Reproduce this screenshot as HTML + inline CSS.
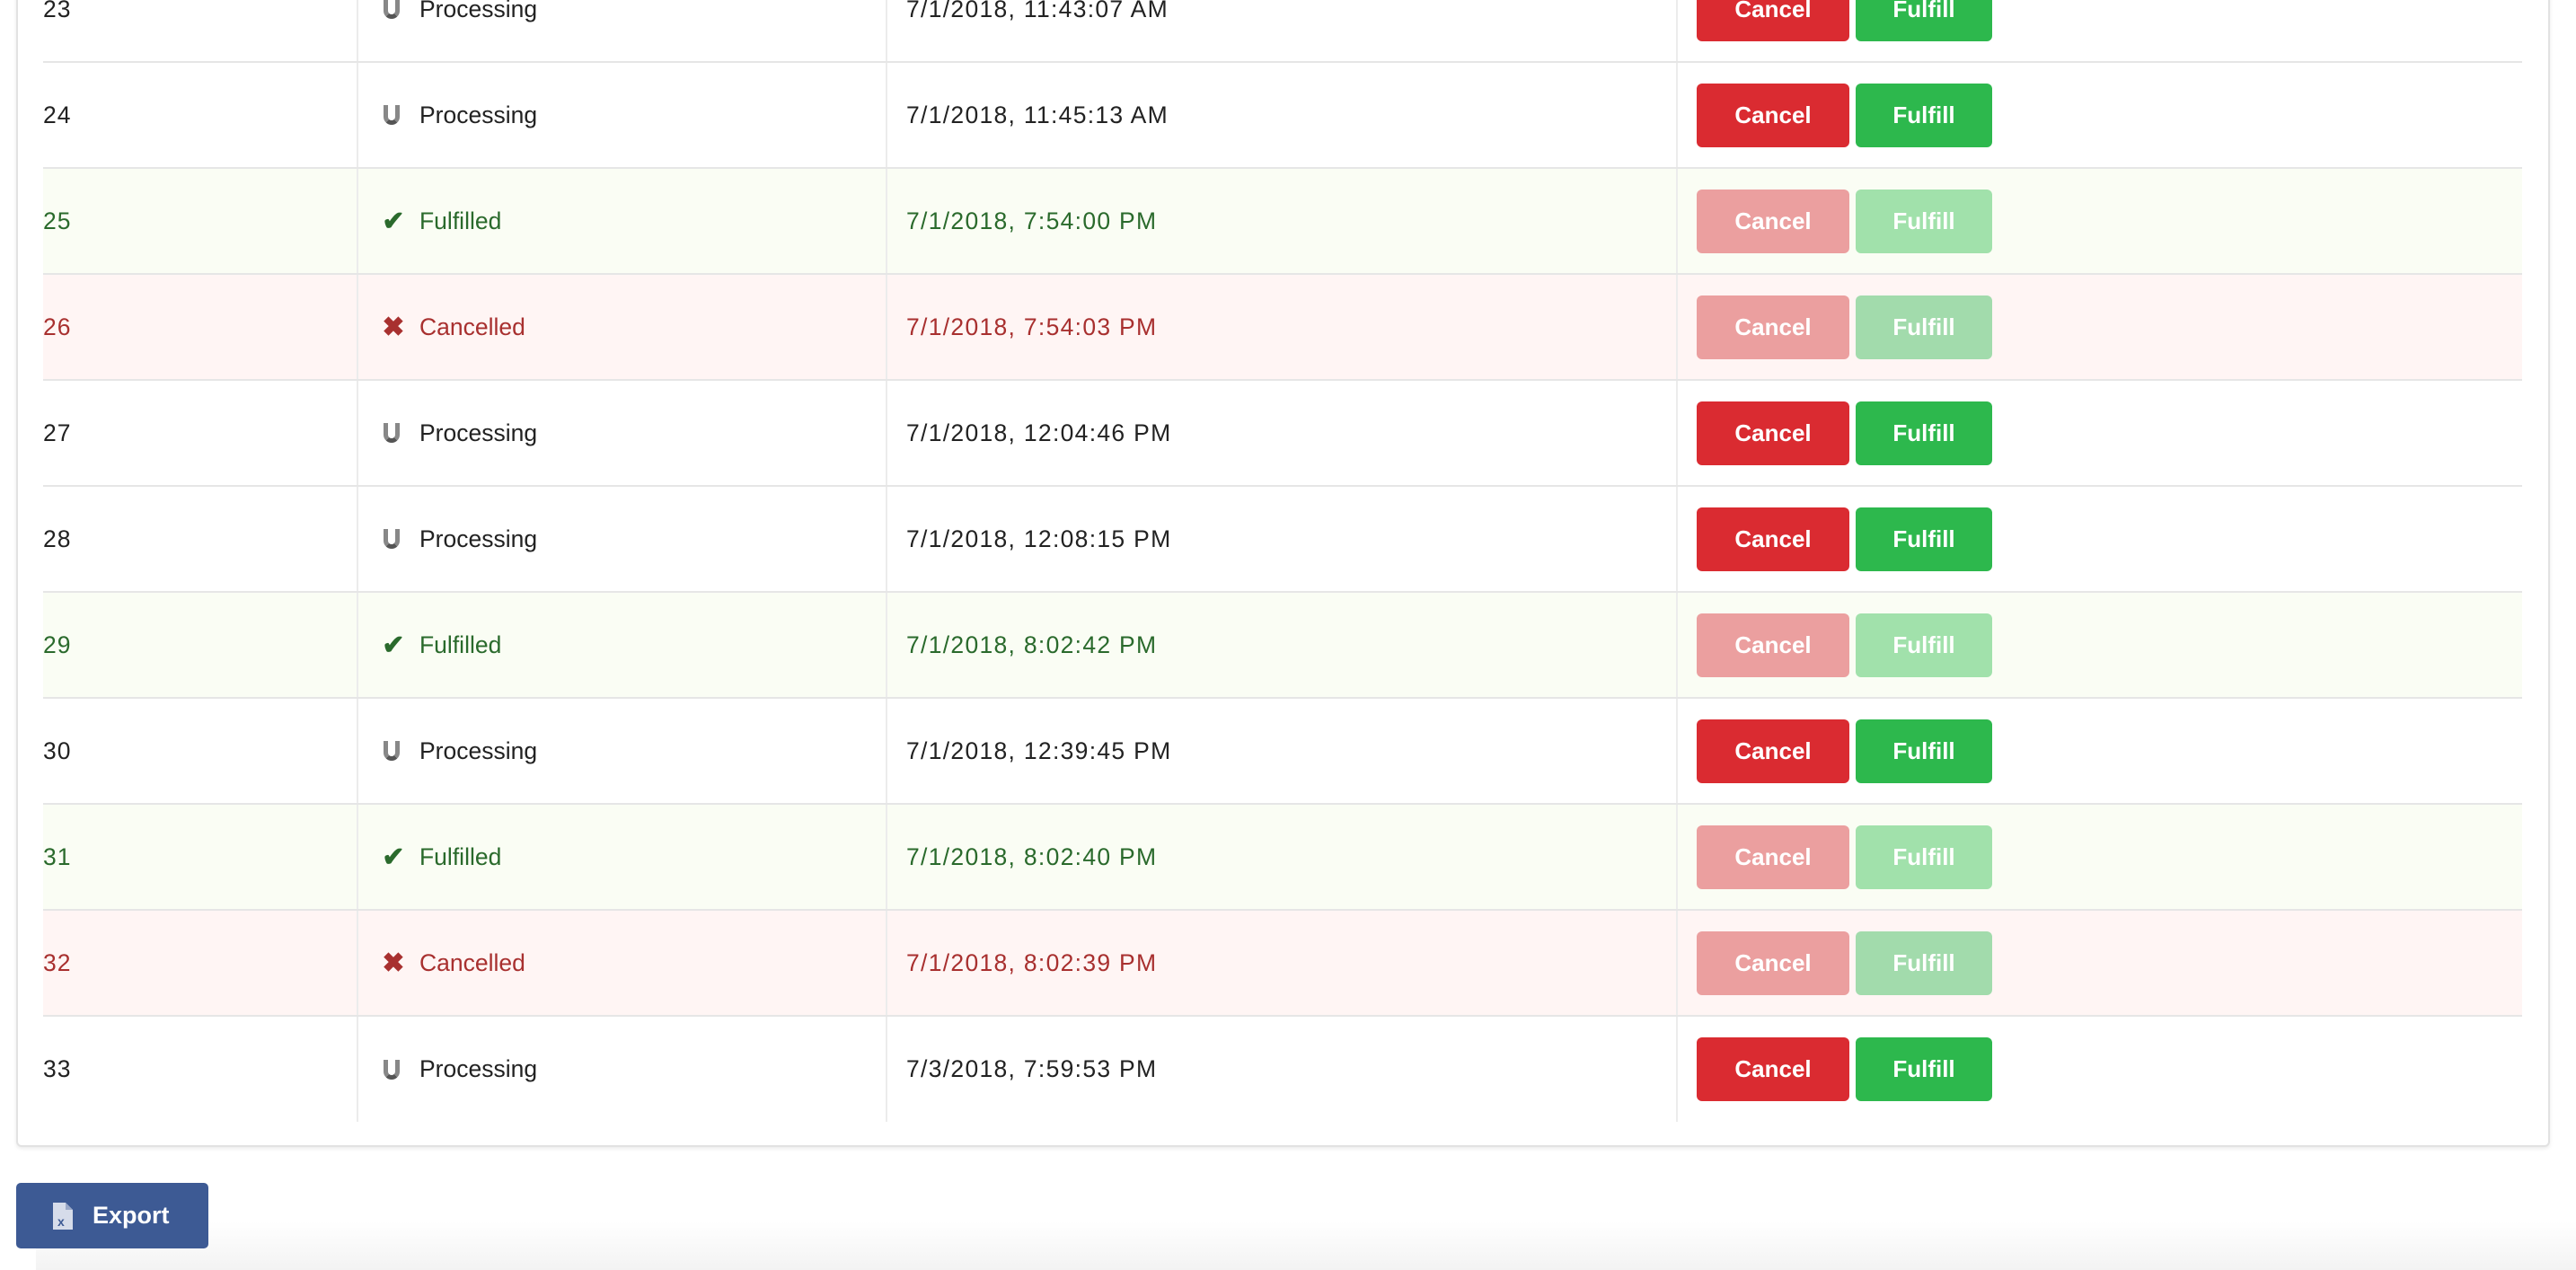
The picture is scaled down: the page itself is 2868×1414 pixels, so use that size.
<!DOCTYPE html>
<html><head><meta charset="utf-8"><style>
html,body{margin:0;padding:0;width:2868px;height:1414px;overflow:hidden;background:#fff;font-family:"Liberation Sans",sans-serif}
.card{position:absolute;left:18px;top:-20px;width:2817px;height:1293px;border:2px solid #e2e2e2;border-radius:6px;box-shadow:0 2px 4px rgba(0,0,0,.08);background:#fff}
.tbl{position:absolute;left:48px;top:-48px;width:2760px}
.row{position:relative;height:116px;border-bottom:2px solid #e6e6e6;font-size:26.5px;color:#222}
.row.last{border-bottom:none;height:117px}
.row.ok{background:#fafdf4;color:#2a6a2c}
.row.no{background:#fff5f4;color:#a8302f}
.c{position:absolute;top:0;height:100%;display:flex;align-items:center}
.c1{left:0;letter-spacing:1px}
.c2{left:349px;width:589px;border-left:2px solid #ececec;padding-left:26px;box-sizing:border-box}
.c3{left:938px;width:880px;border-left:2px solid #ececec;padding-left:21px;box-sizing:border-box;letter-spacing:1.3px}
.c4{left:1818px;width:942px;border-left:2px solid #ececec;padding-left:21px;box-sizing:border-box}
.ic{display:inline-block;width:26px;margin-right:16px;text-align:center;font-weight:bold;font-size:30px}
.u{width:18px;height:22px;margin-right:22px;margin-left:2px;border:5px solid #777;border-top:none;border-radius:0 0 12px 12px;box-sizing:border-box;border-color:#ccc #888 #555 #888}
.b{display:inline-flex;align-items:center;justify-content:center;height:71px;border-radius:6px;color:#fff;font-weight:bold;font-size:26px;letter-spacing:0}
.cn{width:170px;background:#da2b31;margin-right:7px}
.fl{width:152px;background:#2db84d}
.ok .cn,.no .cn{background:#eb9f9f}
.ok .fl{background:#a1e1ab}
.no .fl{background:#a2dbac}
.exp{position:absolute;left:18px;top:1317px;width:214px;height:73px;background:#3d5a94;border-radius:5px;color:#fff;font-weight:bold;font-size:27px;display:flex;align-items:center}
.fade{position:absolute;left:40px;right:0;top:1360px;height:54px;background:linear-gradient(#fff,#f3f3f3)}
</style></head><body>
<div class="fade"></div>
<div class="card"></div>
<div class="tbl">
<div class="row"><div class="c c1">23</div><div class="c c2"><span class="ic u"></span>Processing</div><div class="c c3">7/1/2018, 11:43:07 AM</div><div class="c c4"><span class="b cn">Cancel</span><span class="b fl">Fulfill</span></div></div>
<div class="row"><div class="c c1">24</div><div class="c c2"><span class="ic u"></span>Processing</div><div class="c c3">7/1/2018, 11:45:13 AM</div><div class="c c4"><span class="b cn">Cancel</span><span class="b fl">Fulfill</span></div></div>
<div class="row ok"><div class="c c1">25</div><div class="c c2"><span class="ic">✔</span>Fulfilled</div><div class="c c3">7/1/2018, 7:54:00 PM</div><div class="c c4"><span class="b cn">Cancel</span><span class="b fl">Fulfill</span></div></div>
<div class="row no"><div class="c c1">26</div><div class="c c2"><span class="ic">✖</span>Cancelled</div><div class="c c3">7/1/2018, 7:54:03 PM</div><div class="c c4"><span class="b cn">Cancel</span><span class="b fl">Fulfill</span></div></div>
<div class="row"><div class="c c1">27</div><div class="c c2"><span class="ic u"></span>Processing</div><div class="c c3">7/1/2018, 12:04:46 PM</div><div class="c c4"><span class="b cn">Cancel</span><span class="b fl">Fulfill</span></div></div>
<div class="row"><div class="c c1">28</div><div class="c c2"><span class="ic u"></span>Processing</div><div class="c c3">7/1/2018, 12:08:15 PM</div><div class="c c4"><span class="b cn">Cancel</span><span class="b fl">Fulfill</span></div></div>
<div class="row ok"><div class="c c1">29</div><div class="c c2"><span class="ic">✔</span>Fulfilled</div><div class="c c3">7/1/2018, 8:02:42 PM</div><div class="c c4"><span class="b cn">Cancel</span><span class="b fl">Fulfill</span></div></div>
<div class="row"><div class="c c1">30</div><div class="c c2"><span class="ic u"></span>Processing</div><div class="c c3">7/1/2018, 12:39:45 PM</div><div class="c c4"><span class="b cn">Cancel</span><span class="b fl">Fulfill</span></div></div>
<div class="row ok"><div class="c c1">31</div><div class="c c2"><span class="ic">✔</span>Fulfilled</div><div class="c c3">7/1/2018, 8:02:40 PM</div><div class="c c4"><span class="b cn">Cancel</span><span class="b fl">Fulfill</span></div></div>
<div class="row no"><div class="c c1">32</div><div class="c c2"><span class="ic">✖</span>Cancelled</div><div class="c c3">7/1/2018, 8:02:39 PM</div><div class="c c4"><span class="b cn">Cancel</span><span class="b fl">Fulfill</span></div></div>
<div class="row last"><div class="c c1">33</div><div class="c c2"><span class="ic u"></span>Processing</div><div class="c c3">7/3/2018, 7:59:53 PM</div><div class="c c4"><span class="b cn">Cancel</span><span class="b fl">Fulfill</span></div></div>
</div>
<div class="exp"><svg width="22" height="30" viewBox="0 0 22 30" style="margin-left:41px;margin-right:22px"><path d="M0 0H14L22 8V30H0Z" fill="#d6dcea"/><path d="M14 0V8H22" fill="#9aa8c8"/><text x="5" y="26" font-family="Liberation Sans" font-size="14" font-weight="bold" fill="#3d5a94">x</text></svg>Export</div>
</body></html>
